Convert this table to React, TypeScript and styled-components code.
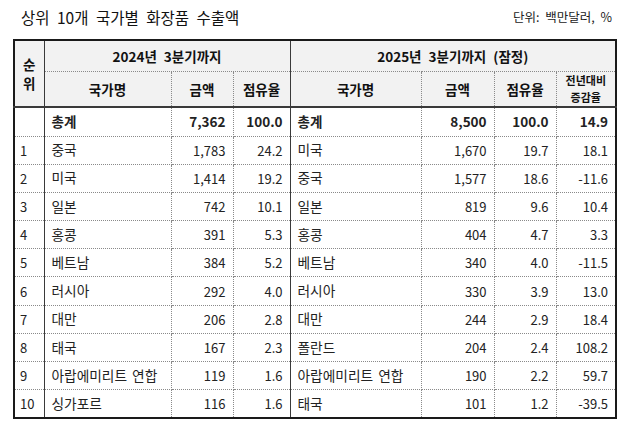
import * as React from 'react';
import { styled, createGlobalStyle } from 'styled-components';

const GlobalStyle = createGlobalStyle`
  html, body {
    margin: 0;
    padding: 0;
    background: #ffffff;
  }
  body {
    width: 630px;
    height: 433px;
    overflow: hidden;
    font-family: 'Noto Sans CJK KR', 'Noto Sans', sans-serif;
    color: #1a1a1a;
  }
`;

const Page = styled.div`
  width: 630px;
  height: 433px;
  box-sizing: border-box;
  padding: 0 15px 0 13px;
`;

const TitleBar = styled.div`
  height: 39px;
  display: flex;
  align-items: center;
  justify-content: space-between;
  padding: 0 3px 6px 8px;
  box-sizing: border-box;
`;

const Title = styled.h1`
  margin: 0;
  font-size: 15.5px;
  font-weight: 400;
  word-spacing: 4px;
  color: #111;
`;

const Unit = styled.span`
  font-size: 12.5px;
  color: #222;
  word-spacing: 3px;
`;

const Table = styled.table`
  border-collapse: collapse;
  table-layout: fixed;
  width: 602px;
  border: 2px solid #1a1a1a;
  font-size: 13px;
  line-height: 1;
`;

const dotted = '1px dotted #8a8a8a';
const solid = '1px solid #3a3a3a';

const HeadCell = styled.th<{ $solidRight?: boolean; $small?: boolean }>`
  background: #f2f2f2;
  font-weight: 700;
  font-size: ${(p) => (p.$small ? '11px' : '13.5px')};
  line-height: ${(p) => (p.$small ? '17px' : '1.35')};
  color: #111;
  text-align: center;
  padding: 0;
  border-top: ${dotted};
  border-left: ${dotted};
  border-right: ${(p) => (p.$solidRight ? solid : dotted)};
  border-bottom: 2px solid #3a3a3a;
  word-spacing: 4px;
`;

const GroupCell = styled(HeadCell)`
  border-bottom: ${dotted};
`;

const Cell = styled.td<{ $align?: 'left' | 'right'; $bold?: boolean; $solidRight?: boolean }>`
  padding: ${(p) => (p.$align === 'right' ? '0 7px 0 0' : '0 0 0 7px')};
  text-align: ${(p) => p.$align ?? 'left'};
  font-weight: ${(p) => (p.$bold ? 700 : 400)};
  font-size: ${(p) => (p.$bold ? '13.5px' : p.$align === 'right' ? '13px' : '13.7px')};
  word-spacing: 2px;
  color: #222;
  border-top: ${dotted};
  border-bottom: ${dotted};
  border-left: ${dotted};
  border-right: ${(p) => (p.$solidRight ? solid : dotted)};
  white-space: nowrap;
  overflow: hidden;
`;

const RankCell = styled(Cell)`
  padding-left: 5px;
  font-size: 13px;
`;

const Row = styled.tr<{ $h: number }>`
  height: ${(p) => p.$h}px;
`;

type Item = { name: string; amount: string; share: string };
type Row2025 = Item & { change: string };

const rows2024: Item[] = [
  { name: '중국', amount: '1,783', share: '24.2' },
  { name: '미국', amount: '1,414', share: '19.2' },
  { name: '일본', amount: '742', share: '10.1' },
  { name: '홍콩', amount: '391', share: '5.3' },
  { name: '베트남', amount: '384', share: '5.2' },
  { name: '러시아', amount: '292', share: '4.0' },
  { name: '대만', amount: '206', share: '2.8' },
  { name: '태국', amount: '167', share: '2.3' },
  { name: '아랍에미리트 연합', amount: '119', share: '1.6' },
  { name: '싱가포르', amount: '116', share: '1.6' },
];

const rows2025: Row2025[] = [
  { name: '미국', amount: '1,670', share: '19.7', change: '18.1' },
  { name: '중국', amount: '1,577', share: '18.6', change: '-11.6' },
  { name: '일본', amount: '819', share: '9.6', change: '10.4' },
  { name: '홍콩', amount: '404', share: '4.7', change: '3.3' },
  { name: '베트남', amount: '340', share: '4.0', change: '-11.5' },
  { name: '러시아', amount: '330', share: '3.9', change: '13.0' },
  { name: '대만', amount: '244', share: '2.9', change: '18.4' },
  { name: '폴란드', amount: '204', share: '2.4', change: '108.2' },
  { name: '아랍에미리트 연합', amount: '190', share: '2.2', change: '59.7' },
  { name: '태국', amount: '101', share: '1.2', change: '-39.5' },
];

function App() {
  return (
    <Page>
      <GlobalStyle />
      <TitleBar>
        <Title>상위 10개 국가별 화장품 수출액</Title>
        <Unit>단위: 백만달러, %</Unit>
      </TitleBar>
      <Table>
        <colgroup>
          <col style={{ width: 30 }} />
          <col style={{ width: 127 }} />
          <col style={{ width: 62 }} />
          <col style={{ width: 57 }} />
          <col style={{ width: 131 }} />
          <col style={{ width: 73 }} />
          <col style={{ width: 62 }} />
          <col style={{ width: 60 }} />
        </colgroup>
        <thead>
          <Row $h={31}>
            <HeadCell rowSpan={2} $solidRight>
              순<br />위
            </HeadCell>
            <GroupCell colSpan={3} $solidRight>
              2024년 3분기까지
            </GroupCell>
            <GroupCell colSpan={4}>2025년 3분기까지 (잠정)</GroupCell>
          </Row>
          <Row $h={36}>
            <HeadCell>국가명</HeadCell>
            <HeadCell>금액</HeadCell>
            <HeadCell $solidRight>점유율</HeadCell>
            <HeadCell>국가명</HeadCell>
            <HeadCell>금액</HeadCell>
            <HeadCell>점유율</HeadCell>
            <HeadCell $small>
              전년대비
              <br />
              증감율
            </HeadCell>
          </Row>
        </thead>
        <tbody>
          <Row $h={29}>
            <RankCell $solidRight />
            <Cell $bold>총계</Cell>
            <Cell $bold $align="right">7,362</Cell>
            <Cell $bold $align="right" $solidRight>100.0</Cell>
            <Cell $bold>총계</Cell>
            <Cell $bold $align="right">8,500</Cell>
            <Cell $bold $align="right">100.0</Cell>
            <Cell $bold $align="right">14.9</Cell>
          </Row>
          {rows2024.map((a, i) => {
            const b = rows2025[i];
            return (
              <Row $h={28.2} key={i}>
                <RankCell $solidRight>{i + 1}</RankCell>
                <Cell>{a.name}</Cell>
                <Cell $align="right">{a.amount}</Cell>
                <Cell $align="right" $solidRight>{a.share}</Cell>
                <Cell>{b.name}</Cell>
                <Cell $align="right">{b.amount}</Cell>
                <Cell $align="right">{b.share}</Cell>
                <Cell $align="right">{b.change}</Cell>
              </Row>
            );
          })}
        </tbody>
      </Table>
    </Page>
  );
}

export default App;
